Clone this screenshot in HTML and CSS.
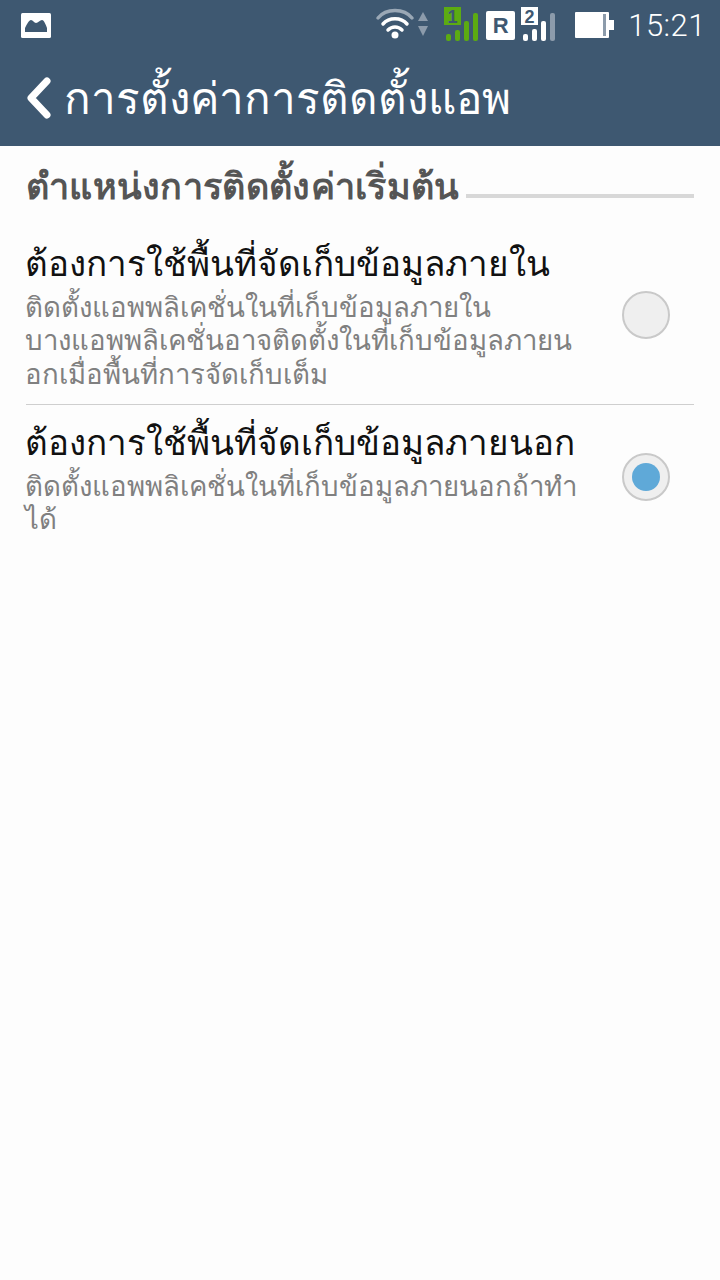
FILE: index.html
```html
<!doctype html>
<html lang="th">
<head>
  <meta charset="utf-8">
  <title>การตั้งค่าการติดตั้งแอพ</title>
  <link rel="stylesheet" href="styles.css">
</head>
<body>
<div class="topBar">
  <div class="statusBar">
    <svg class="statusBar__pic" width="32" height="27" viewBox="0 0 32 27">
      <rect x="1" y="1" width="30" height="25" rx="1.5" fill="#fff"/>
      <path d="M5 20 V16 C7 12 9 8 11 8 C13 8 14 11 16 11 C18 11 20 8 22 8 C24 8 26 13 27 16 V20 Z" fill="#3e5871"/>
    </svg>
    <div class="statusBar__icons">
      <svg class="statusBar__wifi" width="56" height="38" viewBox="0 0 56 38">
        <path d="M3 12 C11 2 29 2 37 12" fill="none" stroke="#9aa8b6" stroke-width="3.500" stroke-linecap="round"/>
        <path d="M8 18 C14 11 26 11 32 18" fill="none" stroke="#fff" stroke-width="3.500" stroke-linecap="round"/>
        <path d="M13 24 C17 20 23 20 27 24" fill="none" stroke="#fff" stroke-width="3.500" stroke-linecap="round"/>
        <circle cx="20" cy="29" r="3.500" fill="#fff"/>
        <path d="M48 6 L53 15 H43 Z" fill="#8c9bab"/>
        <path d="M43 20 H53 L48 30 Z" fill="#8c9bab"/>
      </svg>
      <svg class="statusBar__sim1" width="36" height="38" viewBox="0 0 36 38">
        <rect x="0" y="1" width="17" height="18" fill="#5cab12"/>
        <text x="8.500" y="16.500" class="statusBar__sim">1</text>
        <rect x="2" y="28" width="5" height="7" rx="2" fill="#5cab12"/>
        <rect x="11" y="24" width="5" height="11" rx="2" fill="#5cab12"/>
        <rect x="20" y="15" width="5" height="20" rx="2" fill="#5cab12"/>
        <rect x="29" y="7" width="5" height="28" rx="2" fill="#5cab12"/>
      </svg>
      <div class="statusBar__roam">R</div>
      <svg width="36" height="38" viewBox="0 0 36 38">
        <rect x="0" y="1" width="17" height="18" fill="#fff"/>
        <text x="8.500" y="16.500" class="statusBar__sim">2</text>
        <rect x="2" y="28" width="5" height="7" rx="2" fill="#fff"/>
        <rect x="11" y="23" width="5" height="12" rx="2" fill="#fff"/>
        <rect x="20" y="15" width="5" height="20" rx="2" fill="#fff"/>
        <rect x="29" y="7" width="5" height="28" rx="2" fill="#8c9bab"/>
      </svg>
      <svg class="statusBar__battery" width="39" height="26" viewBox="0 0 39 26">
        <rect x="0" y="0" width="34" height="26" rx="1" fill="#fff"/>
        <rect x="34" y="8" width="5" height="10" fill="#fff"/>
        <rect x="28" y="2" width="3" height="22" fill="#8c9bab"/>
      </svg>
      <span class="statusBar__time">15:21</span>
    </div>
  </div>
  <div class="titleBar">
    <svg class="titleBar__back" width="28" height="42" viewBox="0 0 28 42">
      <path d="M22 4 L6 21 L22 38" fill="none" stroke="#fff" stroke-width="7" stroke-linecap="round" stroke-linejoin="round"/>
    </svg>
    <h1>การตั้งค่าการติดตั้งแอพ</h1>
  </div>
</div>

<div class="settings">
  <div class="sectionHead">
    <h2>ตำแหน่งการติดตั้งค่าเริ่มต้น</h2>
    <div class="sectionHead__line"></div>
  </div>
  <div class="option">
    <div class="option__text">
      <h3>ต้องการใช้พื้นที่จัดเก็บข้อมูลภายใน</h3>
      <p>ติดตั้งแอพพลิเคชั่นในที่เก็บข้อมูลภายใน<br>บางแอพพลิเคชั่นอาจติดตั้งในที่เก็บข้อมูลภายน<br>อกเมื่อพื้นที่การจัดเก็บเต็ม</p>
    </div>
    <div class="radio"></div>
  </div>
  <div class="option option--second">
    <div class="option__text">
      <h3>ต้องการใช้พื้นที่จัดเก็บข้อมูลภายนอก</h3>
      <p>ติดตั้งแอพพลิเคชั่นในที่เก็บข้อมูลภายนอกถ้าทำ<br>ได้</p>
    </div>
    <div class="radio radio--on"></div>
  </div>
</div>
</body>
</html>
```

FILE: styles.css
```css
body {
  margin: 0;
  height: 1280px;
  overflow: hidden;
  background-color: #fdfdfd;
  font-family: "Noto Sans", "DejaVu Sans", sans-serif;
}

.topBar {
  height: 146px;
  background-color: #3e5871;
  color: #ffffff;
}

.statusBar {
  height: 50px;
  display: flex;
  align-items: center;
  justify-content: space-between;
  padding: 0 14px 0 20px;
}

.statusBar__icons {
  display: flex;
  align-items: center;
  gap: 6px;
}

.statusBar__sim {
  font-family: "Liberation Sans", sans-serif;
  font-size: 18px;
  font-weight: 700;
  text-anchor: middle;
  fill: #3e5871;
}

.statusBar__sim1 {
  margin-left: 7px;
}

.statusBar__roam {
  width: 29px;
  height: 29px;
  background-color: #ffffff;
  color: #3e5871;
  border-radius: 2px;
  font-family: "Liberation Sans", sans-serif;
  font-weight: 700;
  font-size: 22px;
  line-height: 29px;
  text-align: center;
}

.statusBar__battery {
  margin-left: 12px;
}

.statusBar__time {
  margin-left: 8px;
  font-family: Roboto, sans-serif;
  font-size: 31px;
  font-weight: 300;
  letter-spacing: 0.5px;
}

.titleBar {
  height: 96px;
  display: flex;
  align-items: center;
  padding-left: 25px;
  gap: 11px;
}

.titleBar h1 {
  margin: 0;
  font-size: 44px;
  font-weight: 400;
  line-height: 94px;
  padding-bottom: 2px;
}

.settings {
  padding: 0 26px;
}

.sectionHead {
  height: 76px;
  display: flex;
  align-items: center;
  gap: 6px;
}

.sectionHead h2 {
  margin: 0;
  padding-top: 4px;
  font-size: 36px;
  letter-spacing: 0.300px;
  font-weight: 700;
  color: #555555;
  white-space: nowrap;
}

.sectionHead__line {
  flex: 1;
  height: 4px;
  margin-top: 24px;
  background-color: #d8d8d8;
}

.option {
  height: 183px;
  display: flex;
  align-items: center;
  justify-content: space-between;
  border-bottom: 1px solid #cfcfcf;
  box-sizing: border-box;
}

.option--second {
  border-bottom: none;
  height: 140px;
}

.option__text h3 {
  margin: 0 0 0 -1px;
  font-size: 35px;
  font-weight: 400;
  line-height: 48px;
  color: #111111;
}

.option__text p {
  margin: 3px 0 -3px -1px;
  font-size: 27.600px;
  line-height: 33.500px;
  color: #808080;
}

.radio {
  width: 44px;
  height: 44px;
  margin: 4px 24px 0 0;
  flex: none;
  border: 2px solid #c9c9c9;
  border-radius: 50%;
  background-color: #efefef;
  display: flex;
  align-items: center;
  justify-content: center;
}

.radio--on::before {
  content: "";
  width: 28px;
  height: 28px;
  border-radius: 50%;
  background-color: #5fa9d8;
}
```
